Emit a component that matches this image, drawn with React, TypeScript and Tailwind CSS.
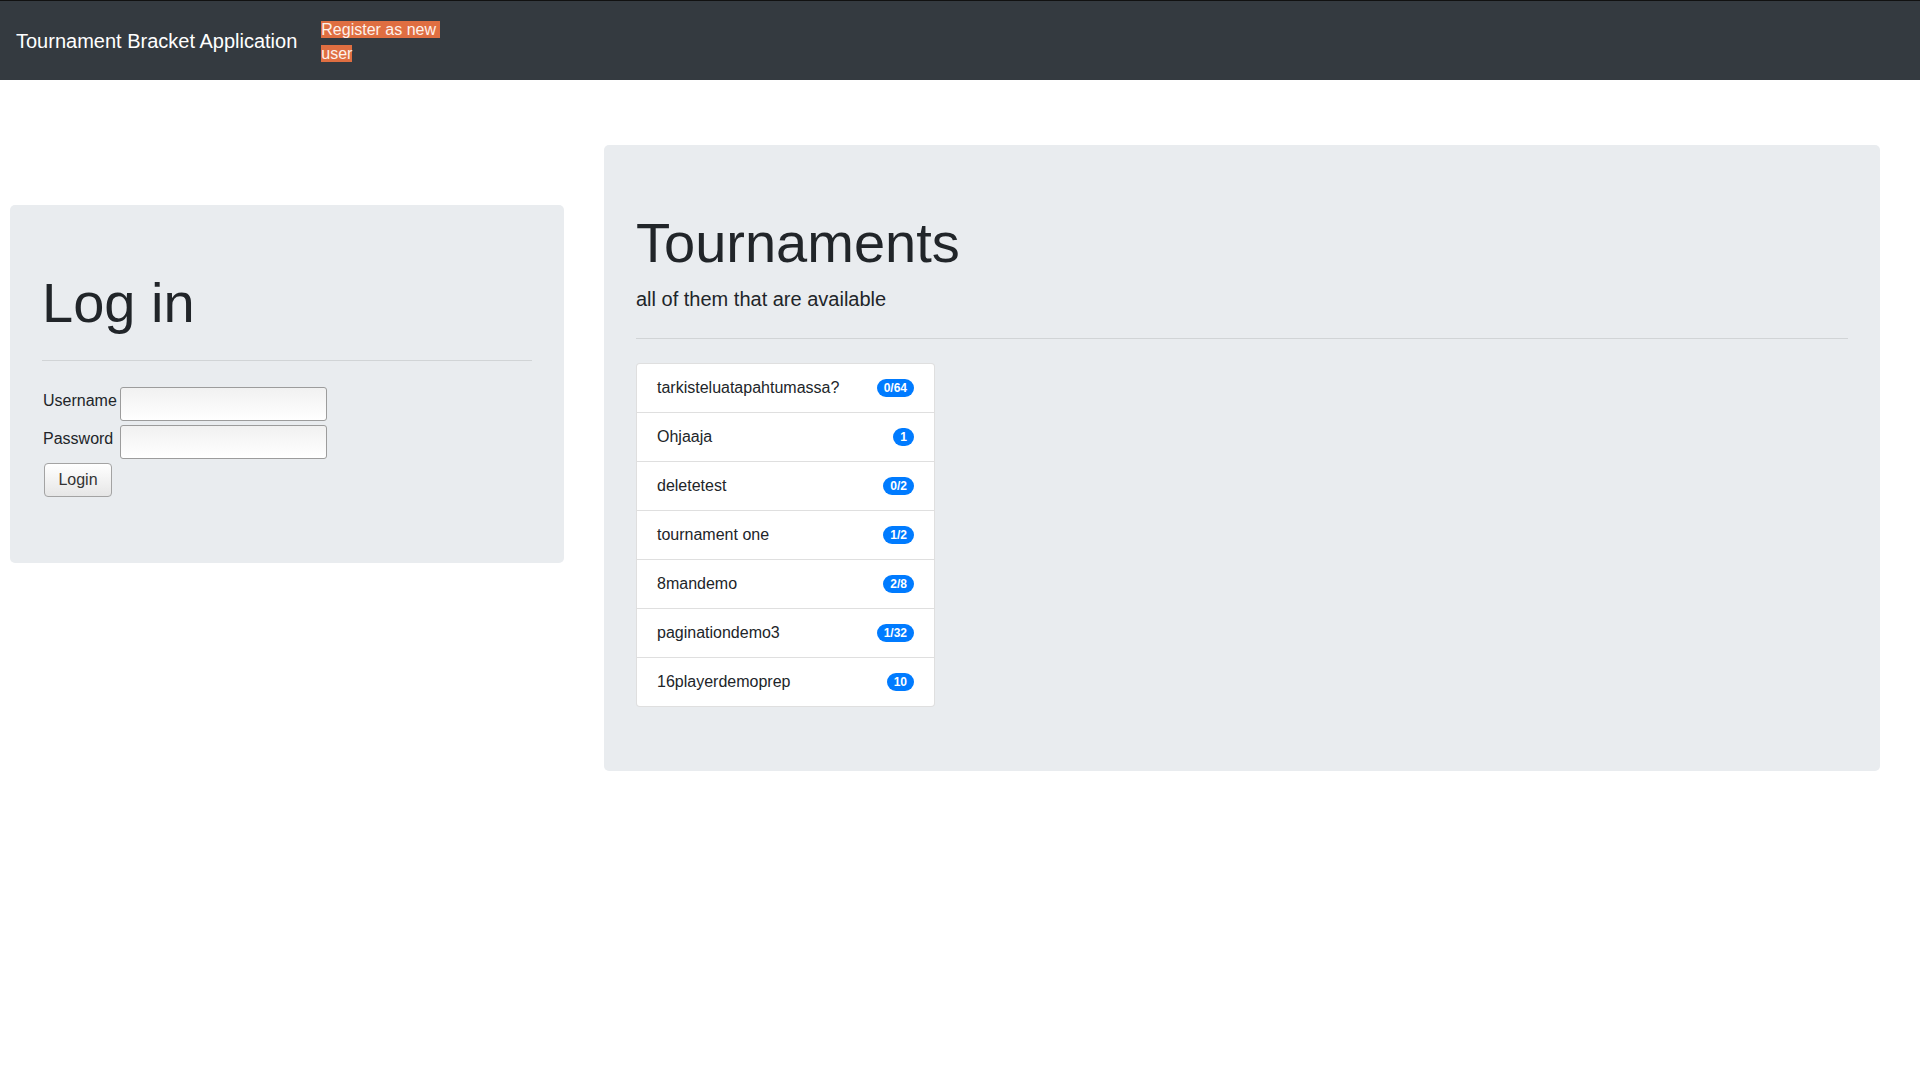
const tournaments = [
  { name: "tarkisteluatapahtumassa?", count: "0/64" },
  { name: "Ohjaaja", count: "1" },
  { name: "deletetest", count: "0/2" },
  { name: "tournament one", count: "1/2" },
  { name: "8mandemo", count: "2/8" },
  { name: "paginationdemo3", count: "1/32" },
  { name: "16playerdemoprep", count: "10" },
];

const NavBar = () => (
  <nav className="flex h-[80px] items-center border-t border-[#111] bg-[#343a40] px-4">
    {/* Brand */}
    <a href="#" className="mr-4 text-[20px] leading-[30px] text-white">
      Tournament Bracket Application
    </a>
    {/* Register link */}
    <div className="w-[132px] pt-[9px] pb-[7px] pl-2 text-[16px] leading-6">
      <a href="#" className="bg-[#df6e41] text-[#fdf1ec]">
        Register as new{"\u00a0"} user
      </a>
    </div>
  </nav>
);

const LoginBox = () => (
  <div className="mt-[125px] w-[554px] rounded-[5px] bg-[#e9ecef] px-8 py-16">
    <h1 className="mb-2 text-[56px] font-light leading-[1.2]">Log in</h1>
    <hr className="my-6 border-black/10" />

    {/* Login form */}
    <form className="flex flex-col gap-[4px] pt-[2px] pb-[2px] pl-px">
      <div className="flex items-center">
        <label className="mb-[6px] w-[77px] text-[16px]">Username</label>
        <input
          type="text"
          className="h-[34px] w-[207px] rounded-[3px] border border-[#9c9c9c] bg-linear-to-b from-[#f1f1f1] to-white px-1 outline-none"
        />
      </div>
      <div className="flex items-center">
        <label className="mb-[6px] w-[77px] text-[16px]">Password</label>
        <input
          type="password"
          className="h-[34px] w-[207px] rounded-[3px] border border-[#9c9c9c] bg-linear-to-b from-[#f1f1f1] to-white px-1 outline-none"
        />
      </div>
      <div>
        <button
          type="button"
          className="ml-px h-[34px] w-[68px] rounded-[4px] border border-[#a3a3a3] bg-linear-to-b from-white to-[#e6e6e6] text-[16px] text-[#333]"
        >
          Login
        </button>
      </div>
    </form>
  </div>
);

const TournamentList = () => (
  <div className="w-[299px] rounded-[4px] border border-black/[0.125] bg-white">
    {tournaments.map((t, i) => (
      <div
        key={t.name}
        className={`flex h-[48px] items-center justify-between px-5 ${
          i > 0 ? "border-t border-black/[0.125] h-[49px]" : ""
        }`}
      >
        <span className="text-[16px]">{t.name}</span>
        <span className="rounded-full bg-[#007bff] px-[7px] py-[3px] text-[12px] font-bold leading-none text-white">
          {t.count}
        </span>
      </div>
    ))}
  </div>
);

const TournamentsBox = () => (
  <div className="mt-[65px] w-[1276px] rounded-[5px] bg-[#e9ecef] px-8 py-16">
    <h1 className="mb-2 text-[56px] font-light leading-[1.2]">Tournaments</h1>
    <p className="mb-4 text-[20px] font-light leading-[1.5]">
      all of them that are available
    </p>
    <hr className="my-6 border-black/10" />
    <TournamentList />
  </div>
);

export default function App() {
  return (
    <div className="min-h-screen bg-white font-['Liberation_Sans',Arial,sans-serif] text-[#212529]">
      <NavBar />
      <main className="flex items-start gap-[40px] pl-[10px]">
        <LoginBox />
        <TournamentsBox />
      </main>
    </div>
  );
}
